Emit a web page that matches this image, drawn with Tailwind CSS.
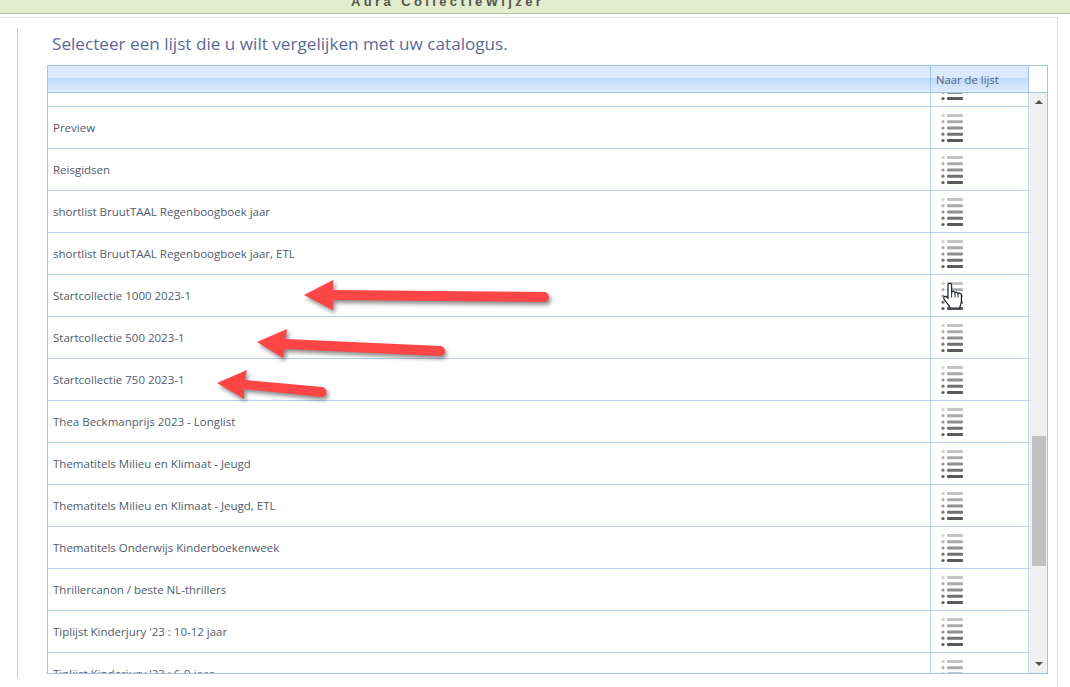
<!DOCTYPE html>
<html lang="nl">
<head>
    <meta charset="UTF-8">
    <title>Aura CollectieWijzer</title>
    <script src="https://cdn.jsdelivr.net/npm/@tailwindcss/browser@4"></script>
</head>
<body class="relative h-[687px] w-[1070px] overflow-hidden bg-white font-['Open_Sans',sans-serif]">
    <!-- Top bar -->
    <header class="h-[14px] overflow-hidden bg-[#e4ecce] border-b border-[#b9bfa6]">
        <div class="-mt-[6px] pl-[351px] font-['Liberation_Sans',sans-serif] text-[13px] leading-[15px] font-bold tracking-[3.38px] text-[#55584f]">Aura CollectieWijzer</div>
    </header>

    <!-- Icon used by every row -->
    <svg class="hidden">
        <symbol id="list-icon" viewBox="0 0 22 31">
            <circle cx="2" cy="2.5" r="1.6" fill="#cfcfcf"/><rect x="6" y="1" width="16" height="3" rx="1" fill="#c4c4c4"/>
            <circle cx="2" cy="8.7" r="1.6" fill="#b4b4b4"/><rect x="6" y="7.2" width="16" height="3" rx="1" fill="#aaaaaa"/>
            <circle cx="2" cy="15" r="1.6" fill="#949494"/><rect x="6" y="13.5" width="16" height="3" rx="1" fill="#8f8f8f"/>
            <circle cx="2" cy="21.2" r="1.6" fill="#777777"/><rect x="6" y="19.7" width="16" height="3" rx="1" fill="#727272"/>
            <circle cx="2" cy="27.5" r="1.6" fill="#5c5c5c"/><rect x="6" y="26" width="16" height="3" rx="1" fill="#595959"/>
        </symbol>
    </svg>

    <div class="mt-[3px] h-[670px] w-[1058px] border-t border-r border-[#dddddd] pt-[10px] pl-[17px]">
        <div class="h-[650px] border-l border-[#b5c9e8] pl-[29px]">
            <h2 class="pt-[4px] pl-[5px] h-[37px] text-[17.15px] leading-[24px] text-[#5b6a99]">Selecteer een lijst die u wilt vergelijken met uw catalogus.</h2>

            <!-- Grid -->
            <div class="w-[1001px] h-[609px] border border-[#a3c2ea] flex flex-col">
                <div class="flex h-[27px] shrink-0 border-b border-[#a3c2ea]">
                    <div class="w-[883px] border-r border-[#a3c2ea] bg-gradient-to-b from-[#dbe9fd] from-45% via-[#bfd8f9] via-48% to-[#dfedfd]"></div>
                    <div class="w-[98px] border-r border-[#a3c2ea] bg-gradient-to-b from-[#dbe9fd] from-45% via-[#bfd8f9] via-48% to-[#dfedfd] pl-[5px] text-[11.3px] leading-[27px] text-[#56637f]">Naar de lijst</div>
                </div>
                <div class="flex flex-1 overflow-hidden">
                    <div id="rows" class="w-[982px] h-[580px] overflow-hidden"></div>
                    <!-- Scrollbar -->
                    <div class="relative flex-1 bg-[#f0f0f0]">
                        <div class="absolute left-[5px] top-[7px] h-0 w-0 border-x-[4px] border-b-[4px] border-x-transparent border-b-[#505050]"></div>
                        <div class="absolute left-[2px] top-[343px] h-[130px] w-[14px] bg-[#c1c1c1]"></div>
                        <div class="absolute left-[5px] top-[569px] h-0 w-0 border-x-[4px] border-t-[4px] border-x-transparent border-t-[#505050]"></div>
                    </div>
                </div>
            </div>
        </div>
    </div>

    <!-- Annotation arrows and mouse pointer -->
    <svg class="absolute left-0 top-0 drop-shadow-[2px_3px_2px_rgba(0,0,0,0.45)]" width="1070" height="687" fill="#ff4646" stroke="none">
        <path d="M304 295 L333 280 L333 290 L544 292 A5 5 0 0 1 544 302 L333 300 L333 310 Z"/>
        <path d="M257 342 L287 329 L286 339 L440 346 A5 5 0 0 1 440 356 L285 349 L283 358 Z"/>
        <path d="M217 383 L247 370 L245 380 L322 387 A5 5 0 0 1 321 397 L244 389 L244 399 Z"/>
    </svg>
    <svg class="absolute left-[943px] top-[282px]" width="20" height="28" viewBox="0 0 20 28">
        <path d="M5 3 C5 .8 8.6 .8 8.6 3 L8.6 10.4 C9.4 9 11.6 9.2 12 10.8 C12.8 9.8 14.8 10.2 15 11.6 C15.8 10.8 18.4 11.2 18.4 13 L18.4 19 C18.4 22 17 23.6 16.6 26 L7 26 C6 23 3.8 21.6 1.2 17.2 C0 15.2 2 13.4 3.8 15 L5 16.4 Z" fill="#fff" stroke="#1e2430" stroke-width="1.2" stroke-linejoin="round"/>
        <path d="M8.6 10.4 L8.6 15.5 M12 10.8 L12 15.5 M15 11.6 L15 15.5" stroke="#1e2430" stroke-width="1" fill="none"/>
    </svg>

    <script>
        const names = ['', 'Preview', 'Reisgidsen', 'shortlist BruutTAAL Regenboogboek jaar',
            'shortlist BruutTAAL Regenboogboek jaar, ETL', 'Startcollectie 1000 2023-1',
            'Startcollectie 500 2023-1', 'Startcollectie 750 2023-1', 'Thea Beckmanprijs 2023 - Longlist',
            'Thematitels Milieu en Klimaat - Jeugd', 'Thematitels Milieu en Klimaat - Jeugd, ETL',
            'Thematitels Onderwijs Kinderboekenweek', 'Thrillercanon / beste NL-thrillers',
            "Tiplijst Kinderjury '23 : 10-12 jaar", "Tiplijst Kinderjury '23 : 6-9 jaar"];

        // list is scrolled 28px down
        document.getElementById('rows').innerHTML = names.map((name, i) => `
            <div class="flex h-[42px] border-b border-[#b8d2f2] ${i === 0 ? '-mt-[28px]' : ''}">
                <div class="w-[883px] border-r border-[#b8d2f2] pl-[5px] text-[11.5px] leading-[41px] text-[#525c6c]">${name}</div>
                <div class="w-[98px] border-r border-[#b8d2f2] pl-[10px] pt-[5.5px]">
                    <svg width="22" height="31"><use href="#list-icon"/></svg>
                </div>
            </div>`).join('');
    </script>
</body>
</html>
